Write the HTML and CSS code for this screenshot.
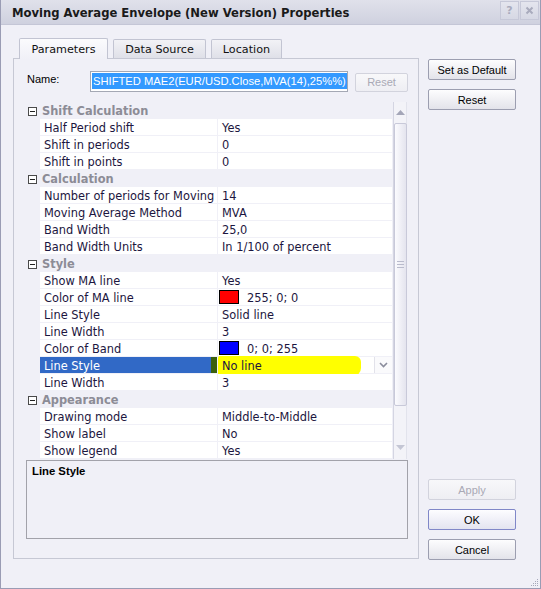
FILE: index.html
```html
<!DOCTYPE html>
<html>
<head>
<meta charset="utf-8">
<link rel="stylesheet" href="styles.css">
</head>
<body>
<div class="window">
  <div class="titlebar">
    <span class="title">Moving Average Envelope (New Version) Properties</span>
    <div class="tb-buttons">
      <span class="tb-btn">?</span>
      <span class="tb-btn"><svg width="9" height="9" viewBox="0 0 9 9"><path d="M1.5 1.5 L7.5 7.5 M7.5 1.5 L1.5 7.5" stroke="#a9abbd" stroke-width="2"/></svg></span>
    </div>
  </div>
  <div class="content">
    <div class="left">
      <div class="tabstrip">
        <div class="tab active">Parameters</div>
        <div class="tab t2">Data Source</div>
        <div class="tab t3">Location</div>
      </div>
      <div class="panel">
        <div class="name-row">
          <span class="name-label">Name:</span>
          <div class="name-input"><span class="sel">SHIFTED MAE2(EUR/USD.Close,MVA(14),25%%)</span></div>
          <div class="btn small disabled">Reset</div>
        </div>
        <div class="grid">
          <div class="rows">
            <div class="group"><span class="tog"></span><span class="gname">Shift Calculation</span></div>
            <div class="row"><div class="lbl">Half Period shift</div><div class="val">Yes</div></div>
            <div class="row"><div class="lbl">Shift in periods</div><div class="val">0</div></div>
            <div class="row"><div class="lbl">Shift in points</div><div class="val">0</div></div>
            <div class="group"><span class="tog"></span><span class="gname">Calculation</span></div>
            <div class="row"><div class="lbl">Number of periods for Moving</div><div class="val">14</div></div>
            <div class="row"><div class="lbl">Moving Average Method</div><div class="val">MVA</div></div>
            <div class="row"><div class="lbl">Band Width</div><div class="val">25,0</div></div>
            <div class="row"><div class="lbl">Band Width Units</div><div class="val">In 1/100 of percent</div></div>
            <div class="group"><span class="tog"></span><span class="gname">Style</span></div>
            <div class="row"><div class="lbl">Show MA line</div><div class="val">Yes</div></div>
            <div class="row"><div class="lbl">Color of MA line</div><div class="val"><span class="swatch red"></span>255; 0; 0</div></div>
            <div class="row"><div class="lbl">Line Style</div><div class="val">Solid line</div></div>
            <div class="row"><div class="lbl">Line Width</div><div class="val">3</div></div>
            <div class="row"><div class="lbl">Color of Band</div><div class="val"><span class="swatch blue"></span>0; 0; 255</div></div>
            <div class="row selected"><div class="lbl">Line Style<span class="mark"></span></div><div class="val"><span class="hl"></span><span class="vtext">No line</span><span class="dd"><svg width="9" height="6" viewBox="0 0 9 6"><path d="M1 1 L4.5 4.5 L8 1" fill="none" stroke="#8a8c9c" stroke-width="1.6"/></svg></span></div></div>
            <div class="row"><div class="lbl">Line Width</div><div class="val">3</div></div>
            <div class="group"><span class="tog"></span><span class="gname">Appearance</span></div>
            <div class="row"><div class="lbl">Drawing mode</div><div class="val">Middle-to-Middle</div></div>
            <div class="row"><div class="lbl">Show label</div><div class="val">No</div></div>
            <div class="row"><div class="lbl">Show legend</div><div class="val">Yes</div></div>
          </div>
          <div class="scrollbar">
            <div class="sb-arrow"><svg width="9" height="5" viewBox="0 0 9 5"><path d="M0 5 L4.5 0 L9 5 Z" fill="#a4a6b8"/></svg></div>
            <div class="thumb"><span class="grip-line"></span><span class="grip-line"></span><span class="grip-line"></span></div>
            <div class="sb-arrow down"><svg width="9" height="5" viewBox="0 0 9 5"><path d="M0 0 L4.5 5 L9 0 Z" fill="#c4c6d4"/></svg></div>
          </div>
        </div>
        <div class="desc"><span class="desc-title">Line Style</span></div>
      </div>
    </div>
    <div class="side">
      <div class="btn-group">
        <div class="btn">Set as Default</div>
        <div class="btn">Reset</div>
      </div>
      <div class="btn-group bottom">
        <div class="btn disabled">Apply</div>
        <div class="btn default">OK</div>
        <div class="btn">Cancel</div>
      </div>
    </div>
  </div>
  <svg class="resize" width="8" height="8" viewBox="0 0 8 8"><g fill="#a6a8ba"><rect x="6" y="0" width="1" height="1"/><rect x="4" y="2" width="1" height="1"/><rect x="6" y="2" width="1" height="1"/><rect x="2" y="4" width="1" height="1"/><rect x="4" y="4" width="1" height="1"/><rect x="6" y="4" width="1" height="1"/><rect x="0" y="6" width="1" height="1"/><rect x="2" y="6" width="1" height="1"/><rect x="4" y="6" width="1" height="1"/><rect x="6" y="6" width="1" height="1"/></g></svg>
</div>
</body>
</html>
```
FILE: styles.css
```css
* { box-sizing: border-box; }
html, body { margin: 0; padding: 0; background: #f0f0f7; }
.window {
  position: relative;
  width: 541px;
  height: 589px;
  border: 1px solid #9a9cb4;
  border-top: none;
  background: #f0f0f7;
  display: flex;
  flex-direction: column;
  font-family: "Liberation Sans", Arial, sans-serif;
  font-size: 11px;
  color: #000;
}
.titlebar {
  height: 25px;
  flex: none;
  display: flex;
  align-items: flex-start;
  background: linear-gradient(#e0e1eb, #cfd1df);
  border-bottom: 1px solid #c4c6d6;
  padding-left: 11px;
}
.title {
  font-family: "DejaVu Sans", Verdana, sans-serif;
  font-weight: bold;
  font-size: 11.6px;
  color: #1a1a1a;
  line-height: 14px;
  margin-top: 6px;
}
.tb-buttons { margin-left: auto; display: flex; gap: 1px; margin-top: 1px; margin-right: 1px; }
.tb-btn {
  width: 19px; height: 19px;
  display: flex; align-items: center; justify-content: center;
  border: 1px solid #c6c8d8;
  background: linear-gradient(#e4e5ee, #d6d8e4);
  color: #a9abbd;
  font-family: "DejaVu Sans", sans-serif;
  font-weight: bold;
  font-size: 11px;
}
.content {
  flex: 1;
  display: flex;
  padding: 13px 0 28px 12px;
}
.left { width: 406px; display: flex; flex-direction: column; }
.tabstrip { height: 20px; display: flex; align-items: flex-end; gap: 5px; padding-left: 6px; }
.tab {
  height: 19px;
  border: 1px solid #c2c4d2;
  border-bottom: none;
  border-radius: 2px 2px 0 0;
  background: linear-gradient(#f2f2f6, #dfe0e8);
  font-family: "DejaVu Sans", Verdana, sans-serif;
  font-size: 11.2px;
  color: #111;
  display: flex; align-items: center; justify-content: center;
  width: 88px;
  padding-top: 1px;
}
.tab.active {
  height: 21px;
  width: 89px;
  background: linear-gradient(#fbfbfd, #f0f0f7);
  position: relative;
  margin-bottom: -1px;
  padding-top: 0;
}
.tab.t2 { width: 93px; }
.tab.t3 { width: 71px; }
.panel {
  height: 501px;
  border: 1px solid #c6c8d4;
  background: #f0f0f7;
  padding: 12px 0 0 13px;
  display: flex;
  flex-direction: column;
}
.name-row { display: flex; align-items: center; height: 21px; }
.name-label { width: 63px; font-size: 11px; margin-top: -6px; }
.name-input {
  width: 258px; height: 21px;
  border: 1px solid #a4a8b4;
  background: #fff;
  padding: 1px 0 0 1px;
  margin-right: 7px;
}
.sel {
  display: inline-block;
  background: #3399ff;
  color: #fff;
  font-size: 11.2px;
  line-height: 16px;
  height: 16px;
  padding: 0 1px;
}
.btn {
  height: 21px;
  width: 88px;
  border: 1px solid #9c9eb0;
  border-radius: 2px;
  background: linear-gradient(#fdfdfe, #f0f0f4 50%, #e3e3ea);
  display: flex; align-items: center; justify-content: center;
  font-size: 11px;
  color: #000;
}
.btn.small { width: 53px; height: 19px; margin-top: 1px; }
.btn.disabled { border-color: #d2d3dd; color: #a9a9b5; background: linear-gradient(#f8f8fa, #eeeef3); }
.btn.default { border-color: #8087c8; background: linear-gradient(#fdfdff, #f0f0f8 50%, #e3e4f0); }

.grid { display: flex; margin-top: 10px; height: 357px; width: 380px; }
.rows { width: 366px; background: #f0f0f7; display: flex; flex-direction: column; }
.group, .row { height: 17px; flex: none; display: flex; }
.group { align-items: center; }
.tog {
  width: 9px; height: 9px; margin-left: 1px; margin-top: 1px;
  border: 1px solid #4a4a4a;
  background: #fff;
  position: relative;
}
.tog::after {
  content: ""; position: absolute; left: 1px; top: 3px; width: 5px; height: 1px; background: #222;
}
.gname {
  margin-left: 5px;
  margin-top: 1px;
  font-family: "DejaVu Sans", Verdana, sans-serif;
  font-weight: bold;
  font-size: 11.4px;
  color: #8c8c96;
}
.row { padding: 0 0 1px 13px; gap: 1px; }
.lbl, .val {
  background: #fff;
  font-family: "DejaVu Sans", Verdana, sans-serif;
  font-size: 11.4px;
  color: #1c1640;
  line-height: 16px;
  white-space: nowrap;
  overflow: hidden;
  display: flex; align-items: center;
  padding-top: 1px;
}
.lbl { width: 177px; padding-left: 4px; }
.val { width: 174px; padding-left: 4px; position: relative; overflow: visible; }
.swatch { width: 20px; height: 14px; border: 1px solid #000; margin: -1px 8px 0 -3px; flex: none; }
.swatch.red { background: #ff0000; }
.swatch.blue { background: #0000ff; }
.row.selected .lbl { background: #3169c6; color: #fff; position: relative; }
.mark { position: absolute; right: 0; top: 0; width: 6px; height: 16px; background: #3a600c; }
.hl {
  position: absolute; left: 0; top: -1px; width: 143px; height: 20px;
  background: #ffff00;
  border-radius: 2px 6px 8px 3px;
}
.vtext { position: relative; }
.dd {
  position: absolute; right: 0; top: 0; width: 18px; height: 16px;
  background: #fafafc;
  border-left: 1px solid #e2e2ea;
  display: flex; align-items: center; justify-content: center;
}
.scrollbar {
  width: 14px;
  border-left: 1px solid #d4d5e2;
  border-right: 1px solid #e2e3ec;
  background: #f3f3f8;
  display: flex; flex-direction: column; align-items: center;
}
.sb-arrow { height: 20px; width: 100%; display: flex; align-items: center; justify-content: center; flex: none; }
.sb-arrow.down { margin-top: auto; height: 24px; }
.thumb {
  width: 13px;
  height: 283px;
  margin-top: 1px;
  border: 1px solid #c8c9d9;
  border-radius: 2px;
  background: linear-gradient(90deg, #fbfbfe, #e4e4ee);
  display: flex; flex-direction: column; align-items: center; justify-content: center; gap: 2px;
}
.grip-line { width: 7px; height: 1px; background: #b9bbcc; }
.desc {
  margin-top: 1px;
  margin-left: -1px;
  width: 382px;
  height: 79px;
  border: 1px solid #a2a2aa;
  padding: 4px 0 0 5px;
}
.desc-title { font-weight: bold; font-size: 11.3px; }
.side {
  width: 88px;
  margin-left: 9px;
  display: flex; flex-direction: column; justify-content: space-between;
}
.btn-group { display: flex; flex-direction: column; gap: 9px; margin-top: 21px; }
.btn-group.bottom { margin-top: 0; }
.resize { position: absolute; right: 1px; bottom: 1px; }
```
